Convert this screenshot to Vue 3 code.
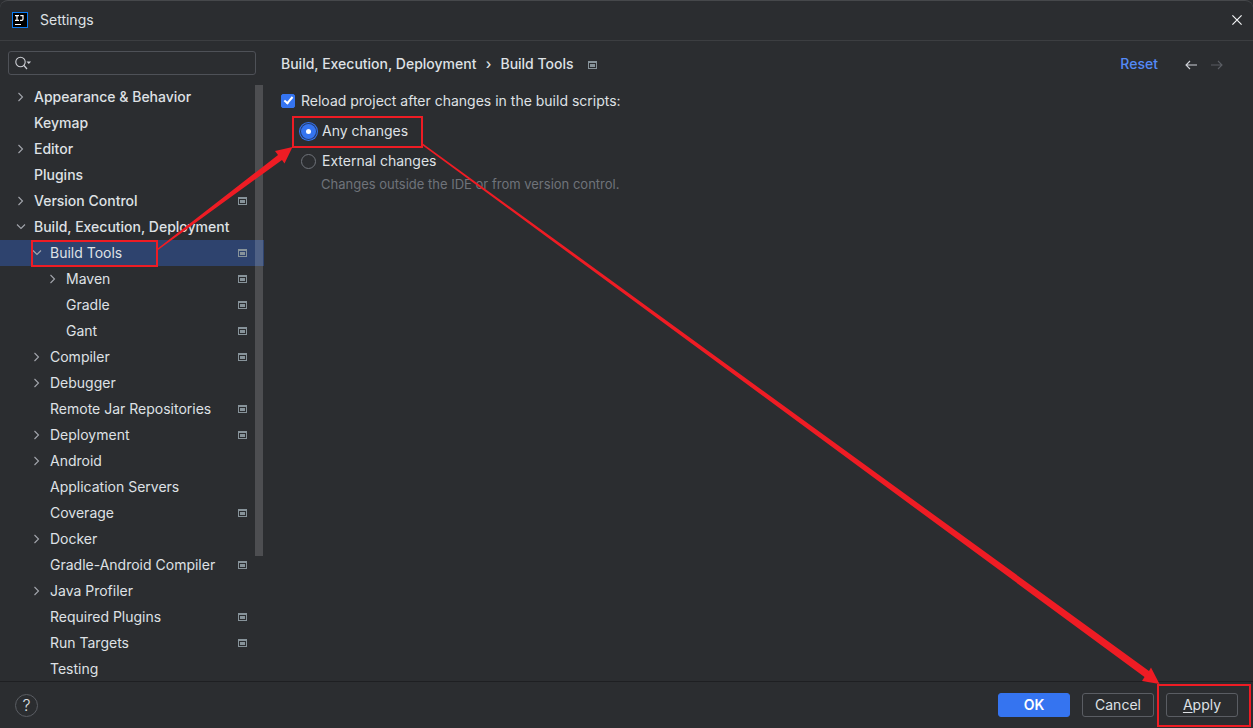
<script setup>
import { ref } from 'vue'

const items = [
  { label: 'Appearance & Behavior', level: 0, arrow: 'right' },
  { label: 'Keymap', level: 0 },
  { label: 'Editor', level: 0, arrow: 'right' },
  { label: 'Plugins', level: 0 },
  { label: 'Version Control', level: 0, arrow: 'right', project: true },
  { label: 'Build, Execution, Deployment', level: 0, arrow: 'down' },
  { label: 'Build Tools', level: 1, arrow: 'down', project: true, selected: true },
  { label: 'Maven', level: 2, arrow: 'right', project: true },
  { label: 'Gradle', level: 2, project: true },
  { label: 'Gant', level: 2, project: true },
  { label: 'Compiler', level: 1, arrow: 'right', project: true },
  { label: 'Debugger', level: 1, arrow: 'right' },
  { label: 'Remote Jar Repositories', level: 1, project: true },
  { label: 'Deployment', level: 1, arrow: 'right', project: true },
  { label: 'Android', level: 1, arrow: 'right' },
  { label: 'Application Servers', level: 1 },
  { label: 'Coverage', level: 1, project: true },
  { label: 'Docker', level: 1, arrow: 'right' },
  { label: 'Gradle-Android Compiler', level: 1, project: true },
  { label: 'Java Profiler', level: 1, arrow: 'right' },
  { label: 'Required Plugins', level: 1, project: true },
  { label: 'Run Targets', level: 1, project: true },
  { label: 'Testing', level: 1 },
]

const query = ref('')
const reload = ref(true)
const mode = ref('any')
</script>

<template>
  <div class="window">
    <header class="titlebar">
      <svg class="logo" width="16" height="16" viewBox="0 0 16 16" aria-hidden="true">
        <rect x="0.5" y="0.5" width="15" height="15" fill="#000" stroke="#0a7cf5" />
        <path d="M3 3.6h4M5 3.6v5M3 8.4h4M8.300 3.600h2.700v3.400q0 1.400-1.400 1.400H8" fill="none" stroke="#fff" stroke-width="1.2" />
        <path d="M3 12.5h6" stroke="#fff" />
      </svg>
      <h1 class="title">Settings</h1>
      <button class="icon-button close" aria-label="Close">
        <svg width="10" height="10" viewBox="0 0 10 10"><path d="M0.4 0.4l9.2 9.2M9.6 0.4L0.4 9.6" stroke="#f2f3f5" stroke-width="1.2" /></svg>
      </button>
    </header>

    <div class="body">
      <aside class="sidebar">
        <label class="search">
          <svg width="18" height="14" viewBox="0 0 18 14" aria-hidden="true">
            <circle cx="5.5" cy="6" r="4.7" fill="none" stroke="#ced0d6" stroke-width="1.1" />
            <path d="M9 9.500l3 3.500" stroke="#ced0d6" stroke-width="1.2" />
            <path d="M11.500 5.600h4.600l-2.300 2.400z" fill="#ced0d6" />
          </svg>
          <input v-model="query" type="text" aria-label="Search settings" />
        </label>
        <nav class="tree" aria-label="Settings categories">
          <a
            v-for="item in items"
            :key="item.label"
            href="#"
            class="row"
            :class="['level-' + item.level, { selected: item.selected }]"
          >
            <span class="arrow">
              <svg v-if="item.arrow" :class="item.arrow" width="10" height="10" viewBox="0 0 10 10"><path d="M2.500 1l4 4-4 4" fill="none" stroke="#a3a6ad" stroke-width="1.1" /></svg>
            </span>
            <span class="label">{{ item.label }}</span>
            <svg v-if="item.project" class="project" width="9" height="8" viewBox="0 0 9 8"><path d="M0 0h9v8H0zM1 2v5h7V2z" fill="#87939a" fill-rule="evenodd" /><path d="M2 3h5v3H2z" fill="#87939a" /></svg>
          </a>
          <div class="scrollbar"></div>
        </nav>
      </aside>

      <main class="content">
        <div class="crumbs">
          <span>Build, Execution, Deployment</span>
          <span class="sep">›</span>
          <span>Build Tools</span>
          <svg class="crumb-project" width="9" height="10" viewBox="0 -2 9 10"><path d="M0 0h9v8H0zM1 2v5h7V2z" fill="#87939a" fill-rule="evenodd" /><path d="M2 3h5v3H2z" fill="#87939a" /></svg>
          <a class="reset" href="#">Reset</a>
          <button class="icon-button" aria-label="Back">
            <svg width="12" height="12" viewBox="0 -2 12 12"><path d="M12 5H1M5 1L1 5l4 4" fill="none" stroke="#ced0d6" stroke-width="1.1" /></svg>
          </button>
          <button class="icon-button forward" aria-label="Forward" disabled>
            <svg width="12" height="12" viewBox="0 -2 12 12"><path d="M0 5h11M7 1l4 4-4 4" fill="none" stroke="#5a5d63" stroke-width="1.1" /></svg>
          </button>
        </div>

        <label class="option">
          <input v-model="reload" type="checkbox" class="check" />
          <span>Reload project after changes in the build scripts:</span>
        </label>
        <div class="choices" role="radiogroup" aria-label="Reload project after changes">
          <label class="option">
            <input v-model="mode" type="radio" name="mode" value="any" class="radio" />
            <span>Any changes</span>
          </label>
          <label class="option">
            <input v-model="mode" type="radio" name="mode" value="external" class="radio" />
            <span>External changes</span>
          </label>
          <p class="hint">Changes outside the IDE or from version control.</p>
        </div>
      </main>
    </div>

    <footer class="footer">
      <button class="help" aria-label="Help">?</button>
      <button class="button primary">OK</button>
      <button class="button">Cancel</button>
      <button class="button apply"><u>A</u>pply</button>
    </footer>

    <svg class="notes" width="1253" height="728" viewBox="0 0 1253 728" aria-hidden="true">
      <g fill="none" stroke="#ee1c24" stroke-width="2">
        <rect x="32" y="241" width="125" height="25" />
        <rect x="293" y="117" width="129" height="30" />
        <rect x="1158" y="685" width="92" height="41" />
      </g>
      <g fill="#ee1c24">
        <path d="M157 249L278 155 275 151 292.500 147 284.500 163.500 282 160 158 250z" />
        <path d="M422 143L1149 671 1151 667.500 1159.500 684 1142 681 1144.500 677 422 145z" />
      </g>
    </svg>
  </div>
</template>

<style>
body {
  margin: 0;
  background: #2b2d30;
}
</style>

<style scoped>
.window {
  position: relative;
  display: flex;
  flex-direction: column;
  height: 100vh;
  box-sizing: border-box;
  overflow: hidden;
  border-top: 1px solid #46484b;
  border-radius: 8px 8px 0 0;
  background: #2b2d30;
  color: #dfe1e5;
  font: 14px/20px Inter, "Liberation Sans", sans-serif;
}

button,
input {
  margin: 0;
  font: inherit;
  color: inherit;
}

a {
  color: inherit;
  text-decoration: none;
}

svg {
  display: block;
  flex: none;
}

.titlebar {
  display: flex;
  flex: none;
  align-items: center;
  height: 37px;
  padding: 0 11px 2px 12px;
  border-bottom: 1px solid #3c3e41;
}

.title {
  flex: 1;
  margin: 0 0 0 12px;
  font-size: 14px;
  font-weight: 400;
}

.icon-button {
  display: flex;
  padding: 0;
  border: 0;
  background: none;
}

.body {
  display: flex;
  flex: 1;
  min-height: 0;
}

.sidebar {
  display: flex;
  flex-direction: column;
  flex: none;
  width: 264px;
}

.search {
  display: flex;
  align-items: center;
  height: 22px;
  margin: 10px 8px 9px;
  padding: 0 6px;
  border: 1px solid #4e5157;
  border-radius: 3px;
}

.search input {
  flex: 1;
  min-width: 0;
  padding: 0 4px;
  border: 0;
  outline: 0;
  background: none;
}

.tree {
  position: relative;
  flex: 1;
  min-height: 0;
  overflow: hidden;
}

.row {
  display: flex;
  align-items: center;
  height: 26px;
  padding-right: 17px;
}

.level-0 {
  padding-left: 16px;
  font-weight: 500;
}

.level-1 {
  padding-left: 32px;
}

.level-2 {
  padding-left: 48px;
}

.selected {
  background: #2e436e;
}

.arrow {
  width: 18px;
}

.down {
  transform: rotate(90deg);
}

.label {
  flex: 1;
  white-space: nowrap;
}

.scrollbar {
  position: absolute;
  top: 1px;
  right: 1px;
  width: 8px;
  height: 471px;
  background: rgba(255, 255, 255, 0.16);
}

.content {
  flex: 1;
  min-width: 0;
  padding: 13px 30px 0 17px;
}

.crumbs {
  display: flex;
  align-items: center;
  margin-bottom: 17px;
  font-weight: 500;
}

.sep {
  width: 24px;
  text-align: center;
}

.crumb-project {
  margin-left: 14px;
}

.reset {
  margin: 0 27px 0 auto;
  color: #548af7;
  font-weight: 500;
}

.forward {
  margin-left: 14px;
}

.option {
  display: flex;
  align-items: center;
  gap: 6px;
}

.check,
.radio {
  display: grid;
  place-items: center;
  flex: none;
  width: 14px;
  height: 14px;
  box-sizing: border-box;
  appearance: none;
}

.check {
  border: 1px solid #6f737a;
  border-radius: 2px;
}

.check:checked {
  border-color: #3574f0;
  background: #3574f0;
}

.check:checked::before {
  width: 7px;
  height: 3px;
  margin-bottom: 3px;
  border: solid #fff;
  border-width: 0 0 2px 2px;
  content: "";
  transform: rotate(-50deg);
}

.choices {
  display: grid;
  gap: 10px;
  margin: 10px 0 0 20px;
}

.radio {
  width: 15px;
  height: 15px;
  border: 1px solid #6f737a;
  border-radius: 50%;
}

.radio:checked {
  border: 0;
  background: #3574f0;
  box-shadow: 0 0 0 1px #253b6b, 0 0 0 2px #3574f0;
}

.radio:checked::before {
  width: 5px;
  height: 5px;
  border-radius: 50%;
  background: #fff;
  content: "";
}

.hint {
  margin: -7px 0 0 20px;
  color: #6f737a;
  font-size: 13px;
}

.footer {
  display: flex;
  flex: none;
  align-items: center;
  height: 46px;
  padding: 0 15px;
  border-top: 1px solid #1e1f22;
}

.help {
  width: 23px;
  height: 23px;
  margin-right: auto;
  padding: 0;
  border: 1px solid #5a5d63;
  border-radius: 50%;
  background: none;
  font-size: 16px;
  font-weight: 300;
}

.button {
  min-width: 72px;
  height: 24px;
  margin-left: 12px;
  padding: 0 12px;
  border: 1px solid #5a5d63;
  border-radius: 3px;
  background: none;
  line-height: 20px;
}

.primary {
  border-color: #3574f0;
  background: #3574f0;
  color: #fff;
  font-weight: 600;
}

.apply u {
  text-underline-offset: 2px;
}

.notes {
  position: absolute;
  top: -1px;
  left: 0;
  pointer-events: none;
}
</style>
